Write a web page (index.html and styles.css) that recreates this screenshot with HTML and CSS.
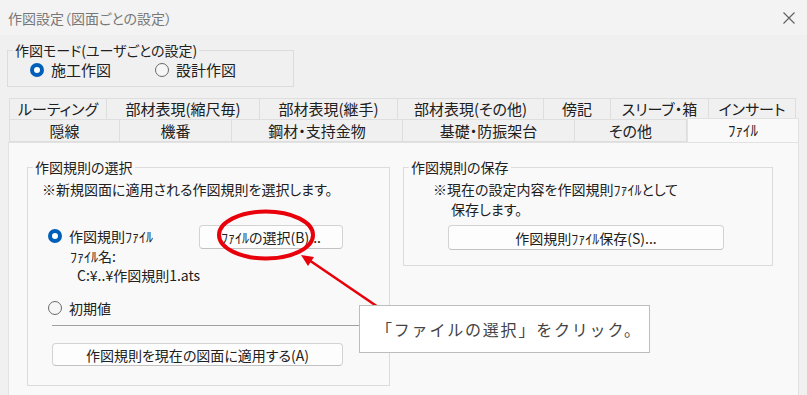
FILE: index.html
```html
<!DOCTYPE html>
<html lang="ja">
<head>
    <meta charset="UTF-8">
    <meta name="viewport" content="width=device-width, initial-scale=1.0">
    <title>作図設定</title>
    <link rel="stylesheet" href="styles.css">
</head>
<body>
    <div class="titlebar">
        <span class="title">作図設定（図面ごとの設定）</span>
        <svg class="close" width="12" height="12" viewBox="0 0 12 12">
            <path d="M0.5 0.5 L11.5 11.5 M11.5 0.5 L0.5 11.5" stroke="#5f5f5f" stroke-width="1.1" fill="none"/>
        </svg>
    </div>

    <fieldset class="mode">
        <legend>作図モード(ユーザごとの設定)</legend>
        <div class="mode-row">
            <label class="radio radio-wide"><span class="dot on"></span>施工作図</label>
            <label class="radio"><span class="dot"></span>設計作図</label>
        </div>
    </fieldset>

    <div class="tabs">
        <div class="tab-row row1">
            <div class="tab">ルーティング</div>
            <div class="tab">部材表現(縮尺毎)</div>
            <div class="tab">部材表現(継手)</div>
            <div class="tab">部材表現(その他)</div>
            <div class="tab">傍記</div>
            <div class="tab">スリーブ・箱</div>
            <div class="tab">インサート</div>
        </div>
        <div class="tab-row row2">
            <div class="tab">隠線</div>
            <div class="tab">機番</div>
            <div class="tab">鋼材・支持金物</div>
            <div class="tab">基礎・防振架台</div>
            <div class="tab">その他</div>
            <div class="tab active">ﾌｧｲﾙ</div>
        </div>
    </div>

    <div class="panel">
        <fieldset class="group group-select">
            <legend>作図規則の選択</legend>
            <div class="note">※新規図面に適用される作図規則を選択します。</div>
            <div class="file-row">
                <div class="file-col">
                    <label class="radio"><span class="dot on"></span>作図規則ﾌｧｲﾙ</label>
                    <div class="file-label">ﾌｧｲﾙ名:</div>
                    <div class="file-path">C:¥..¥作図規則1.ats</div>
                </div>
                <button class="btn btn-browse">ﾌｧｲﾙの選択(B)...</button>
            </div>
            <label class="radio radio-default"><span class="dot"></span>初期値</label>
            <div class="divider"></div>
            <button class="btn btn-apply">作図規則を現在の図面に適用する(A)</button>
        </fieldset>

        <fieldset class="group group-save">
            <legend>作図規則の保存</legend>
            <div class="save-note">
                <div>※現在の設定内容を作図規則ﾌｧｲﾙとして</div>
                <div class="indent">保存します。</div>
            </div>
            <button class="btn btn-save">作図規則ﾌｧｲﾙ保存(S)...</button>
        </fieldset>
    </div>

    <svg class="marks" width="807" height="395" viewBox="0 0 807 395">
        <ellipse cx="266" cy="235" rx="47" ry="23.5" fill="none" stroke="#e8000b" stroke-width="4"/>
        <line x1="378" y1="307" x2="309" y2="260" stroke="#e8000b" stroke-width="2.6"/>
        <polygon points="301,255 308,266 314,257" fill="#e8000b"/>
    </svg>

    <div class="callout">「ファイルの選択」をクリック。</div>
</body>
</html>
```

FILE: styles.css
```css
html {
    overflow: hidden;
}

body {
    margin: 0;
    width: 807px;
    height: 395px;
    position: relative;
    background-color: #f0f0f0;
    font-family: "Noto Sans CJK JP", "Noto Sans", sans-serif;
    font-size: 14px;
    font-feature-settings: "palt";
    color: #202020;
}

/* title bar */
.titlebar {
    height: 35px;
    background-color: #f3f3f3;
    display: flex;
    align-items: center;
    justify-content: space-between;
    padding: 0 12px 0 8px;
}

.title {
    color: #777;
}

/* radio buttons */
.radio {
    display: flex;
    align-items: center;
    height: 20px;
    line-height: 20px;
    white-space: nowrap;
}

.dot {
    width: 14px;
    height: 14px;
    box-sizing: border-box;
    border-radius: 50%;
    border: 1px solid #6a6a6a;
    background: #f6f6f6;
    margin-right: 7px;
    flex: none;
}

.dot.on {
    border: 4px solid #005fb8;
    background: #fff;
}

/* group boxes */
fieldset {
    margin: 0;
    padding: 0;
    border: 1px solid #dcdcdc;
    box-sizing: border-box;
}

legend {
    padding: 0 2px;
    margin-left: 5px;
    line-height: 20px;
}

.mode {
    margin: 5px 0 11px 7px;
    width: 287px;
    padding-bottom: 6px;
}

.mode-row {
    display: flex;
    padding-left: 22px;
    font-size: 15px;
}

.radio-wide {
    width: 125px;
}

/* tabs */
.tabs {
    margin-left: 9px;
    font-size: 15px;
}

.tab-row {
    display: grid;
    height: 22px;
}

.row1 {
    grid-template-columns: 98px 153px 138px 146px 67px 98px 87px;
}

.row2 {
    grid-template-columns: 111px 112px 171px 172px 112px 112px;
}

.tab {
    border: 1px solid #dedede;
    border-left: none;
    background: #f0f0f0;
    text-align: center;
    line-height: 20px;
    white-space: nowrap;
}

.tab:first-child {
    border-left: 1px solid #dedede;
}

.row2 .tab {
    border-top: none;
    line-height: 21px;
}

.row2 .tab.active {
    margin-top: -2px;
    background: #f9f9f9;
    border: 1px solid #e2e2e2;
    border-bottom: none;
    line-height: 22px;
    position: relative;
    z-index: 1;
}

/* panel */
.panel {
    margin-left: 8px;
    width: 791px;
    height: 270px;
    box-sizing: border-box;
    background: #f9f9f9;
    border: 1px solid #e2e2e2;
    display: flex;
    align-items: flex-start;
    gap: 13px;
    padding: 14px 0 0 18px;
}

.group-select {
    width: 363px;
    height: 229px;
}

.group-save {
    width: 370px;
    height: 109px;
}

.note {
    margin: 2px 0 0 14px;
    line-height: 20px;
}

.file-row {
    display: flex;
    align-items: flex-start;
    margin: 26px 0 0 20px;
}

.file-col {
    width: 151px;
    padding-top: 1px;
    white-space: nowrap;
}

.file-label {
    margin-left: 22px;
    line-height: 20px;
}

.file-path {
    margin-left: 29px;
    line-height: 19px;
}

.radio-default {
    margin: 13px 0 0 20px;
}

.divider {
    margin: 7px 0 0 24px;
    width: 334px;
    border-top: 1px solid #a0a0a0;
}

/* buttons */
.btn {
    display: block;
    font-family: inherit;
    font-size: 14px;
    font-feature-settings: "palt";
    color: #202020;
    background: #fdfdfd;
    border: 1px solid #d3d3d3;
    border-bottom-color: #c2c2c2;
    border-radius: 4px;
    padding: 0;
    white-space: nowrap;
}

.btn-browse {
    width: 144px;
    height: 24px;
}

.btn-apply {
    width: 291px;
    height: 23px;
    margin: 17px 0 0 24px;
}

.save-note {
    margin: 2px 0 0 29px;
    line-height: 20px;
}

.indent {
    margin-left: 18px;
}

.btn-save {
    width: 276px;
    height: 25px;
    margin: 6px 0 0 44px;
}

/* annotation overlay */
.marks {
    position: absolute;
    left: 0;
    top: 0;
    pointer-events: none;
}

.callout {
    position: absolute;
    left: 359px;
    top: 305px;
    width: 291px;
    height: 48px;
    box-sizing: border-box;
    background: #fff;
    border: 1px solid #bdbdbd;
    padding-left: 16px;
    line-height: 46px;
    font-size: 16px;
    font-feature-settings: normal;
    letter-spacing: 1.8px;
    color: #444;
    white-space: nowrap;
}
```
